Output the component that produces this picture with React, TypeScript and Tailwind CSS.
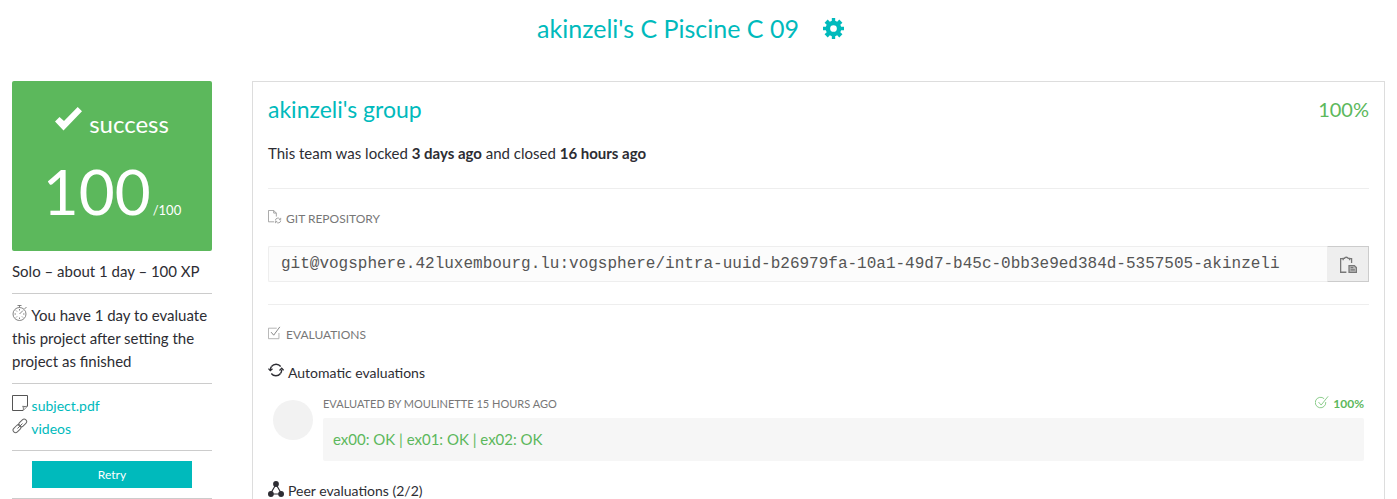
import type { ReactNode, SVGProps } from "react";

function Icon({ children, ...props }: SVGProps<SVGSVGElement> & { children: ReactNode }) {
  return (
    <svg viewBox="0 0 16 16" fill="none" stroke="currentColor" strokeWidth="1" aria-hidden="true" {...props}>
      {children}
    </svg>
  );
}

function GearIcon() {
  return (
    <svg viewBox="0 0 20 20" className="size-[21px]" fill="currentColor" aria-hidden="true">
      <path
        fillRule="evenodd"
        d="M8.4 0h3.2v2.7l1.9.8 2-2 3 3-2 2 .8 1.9H20v3.2h-2.7l-.8 1.9 2 2-3 3-2-2-1.9.8V20H8.400v-2.700l-1.900-.8-2 2-3-3 2-2-.8-1.900H0V8.400h2.700l.8-1.900-2-2 3-3 2 2 1.900-.8zM10 6.800a3.200 3.200 0 1 0 0 6.400 3.200 3.200 0 0 0 0-6.400z"
      />
    </svg>
  );
}

function CheckIcon() {
  return (
    <svg viewBox="0 0 28 24" className="mt-0.5 h-6 w-7" fill="currentColor" aria-hidden="true">
      <path d="M0 14.500 4.500 10l4.500 4L22.700 0 27 4.300 8.500 23.500z" />
    </svg>
  );
}

function StopwatchIcon() {
  return (
    <Icon className="inline size-4 align-baseline text-[#666]">
      <circle cx="7.500" cy="9" r="6.500" strokeWidth=".8" />
      <path
        d="M5.500.5h4M7.500.5v2M12.500 4l2-2M7.500 4v1.500M7.500 12.500V14M2.500 9H4M11 9h1.500M4 5.500l1 1M11 5.500 7.500 9M4 12.500l1-1M11 12.500l-1-1"
        strokeWidth=".8"
      />
    </Icon>
  );
}

function NoteIcon() {
  return (
    <Icon className="inline size-4 align-baseline text-[#555]">
      <path d="M.5.5h15v10.500l-4.500 4.500H.5z" />
      <path d="M11 15.500c.6-1.500.5-3-.3-4.300 1.500.5 3.300.4 4.800-.2" fill="#ddd" strokeWidth=".8" />
    </Icon>
  );
}

function LinkIcon() {
  return (
    <Icon className="inline size-4 align-baseline text-[#666]">
      <rect x="-4.500" y="-2.500" width="9" height="5" rx="2.500" transform="translate(10.700 5) rotate(-45)" />
      <rect x="-4.500" y="-2.500" width="9" height="5" rx="2.500" transform="translate(5 10.700) rotate(-45)" />
      <path d="m5.500 10.500 5-5" />
    </Icon>
  );
}

function RepoIcon() {
  return (
    <Icon className="mb-1 size-3.5 text-[#999]">
      <path d="M7 13.500H.5V.5h6l3 3v4M6.500.5v3h3" />
      <path d="M8.500 12a2.700 2.700 0 0 1 5-1.500M14.500 9v2h-2M14.500 12a2.700 2.700 0 0 1-5 1.500M8.500 15v-2h2" />
    </Icon>
  );
}

function PasteIcon() {
  return (
    <Icon className="size-[17px] text-[#777]" strokeWidth="1.2">
      <path d="M6 15.300H.6V2.500h2.500M8.500 2.500h2.400v4" />
      <path d="M3 4V2.300h1.200C4.500.8 7.300.8 7.700 2.300H9V4" />
      <path d="M8.500 9h5l2 2v4.500h-7z" fill="#bbb" />
      <path d="M10 11h2.500M10 13h4" />
    </Icon>
  );
}

function CheckBoxIcon() {
  return (
    <Icon className="mb-1 size-3.5 text-[#aaa]">
      <path d="M10 2.500H.5v12h12V8" />
      <path d="m3.500 7 3 3.500L13.500 1" stroke="#777" />
    </Icon>
  );
}

function SyncIcon() {
  return (
    <Icon className="mb-1.5 size-4" strokeWidth="1.3">
      <path d="M3.500 4.500A5.800 5.800 0 0 1 12.700 4.500M12.500 11.500A5.800 5.800 0 0 1 3.300 11.500" />
      <path d="M2.300 8.300A5.800 5.800 0 0 1 3.500 4.500M13.700 7.700a5.800 5.800 0 0 1-1.200 3.800" />
      <path d="m.4 6.600 1.900 2 2.200-1.900M11.500 8.500l2.200-2.200 1.900 2.100" />
    </Icon>
  );
}

function PeersIcon() {
  return (
    <Icon className="mb-1 size-4">
      <path d="M7 5 3.500 11M9 5l3.500 6M5 13h6" strokeWidth="1.2" />
      <circle cx="8" cy="3" r="2.900" fill="currentColor" stroke="none" />
      <circle cx="2.900" cy="13" r="2.900" fill="currentColor" stroke="none" />
      <circle cx="13.100" cy="13" r="2.900" fill="currentColor" stroke="none" />
    </Icon>
  );
}

function ValidatedIcon() {
  return (
    <Icon className="mb-1 size-3.5" strokeWidth=".8">
      <path d="M10.500 4.300A6 6 0 1 0 12.300 8" />
      <path d="m4 8 3 3.500L15 1.500" />
    </Icon>
  );
}

function SectionLabel({ icon, children }: { icon: ReactNode; children: ReactNode }) {
  return (
    <h4 className="flex h-5 items-center gap-1 text-xs leading-5 text-[#777] uppercase">
      {icon}
      {children}
    </h4>
  );
}

function Sidebar() {
  return (
    <aside className="w-[200px] shrink-0 leading-[23px]">
      <div className="flex h-[170px] flex-col items-center rounded-xs bg-[#5cb85c] pt-6 text-white">
        <div className="flex items-start gap-1.5 text-2xl leading-[38px]">
          <CheckIcon />
          <span>success</span>
        </div>
        <div className="flex items-baseline gap-0.5 pt-1 text-[62px] leading-[88px]">
          <span>100</span>
          <span className="text-[13px]">/100</span>
        </div>
      </div>
      <p className="border-b border-[#ccc] pt-[9px] pb-2.5">Solo – about 1 day – 100 XP</p>
      <p className="border-b border-[#ccc] py-2.5">
        <StopwatchIcon /> You have 1 day to evaluate this project after setting the project as finished
      </p>
      <ul className="border-b border-[#ccc] py-2.5 text-sm leading-[23px]">
        <li>
          <NoteIcon /> <a href="#subject" className="text-[#00babc]">subject.pdf</a>
        </li>
        <li>
          <LinkIcon /> <a href="#videos" className="text-[#00babc]">videos</a>
        </li>
      </ul>
      <div className="border-b border-[#ccc] px-5 py-2.5">
        <button type="button" className="block h-[27px] w-full bg-[#00babc] text-xs text-white">
          Retry
        </button>
      </div>
    </aside>
  );
}

function Team() {
  return (
    <main className="min-w-0 flex-1 border border-[#ddd] px-[15px] pt-[11px] pb-12">
      <div className="flex items-center justify-between leading-8">
        <h2 className="text-[23px] leading-8 text-[#00babc]">akinzeli's group</h2>
        <span className="text-xl text-[#5cb85c]">100%</span>
      </div>
      <p className="mt-4 leading-6">
        This team was locked <strong>3 days ago</strong> and closed <strong>16 hours ago</strong>
      </p>

      <section className="mt-[23px] border-t border-[#eee] pt-5">
        <SectionLabel icon={<RepoIcon />}>Git repository</SectionLabel>
        <div className="mt-[17px] flex h-9">
          <input
            readOnly
            aria-label="Git repository"
            value="git@vogsphere.42luxembourg.lu:vogsphere/intra-uuid-b26979fa-10a1-49d7-b45c-0bb3e9ed384d-5357505-akinzeli"
            className="min-w-0 flex-1 rounded-l-xs border border-r-0 border-[#eee] bg-[#fcfcfc] px-3 font-['Liberation_Mono',monospace] text-base text-[#555]"
          />
          <button
            type="button"
            aria-label="Copy repository address"
            className="flex w-[42px] items-center justify-center border border-[#ccc] border-l-[#eee] bg-[#eee]"
          >
            <PasteIcon />
          </button>
        </div>
      </section>

      <section className="mt-[22px] border-t border-[#eee] pt-5">
        <SectionLabel icon={<CheckBoxIcon />}>Evaluations</SectionLabel>
        <h4 className="mt-4 flex h-6 items-center gap-1 text-sm">
          <SyncIcon />
          Automatic evaluations
        </h4>
        <div className="flex px-[5px] pt-2.5">
          <div className="mt-[5px] mr-2.5 size-10 shrink-0 rounded-full bg-[#f2f2f2]" />
          <div className="min-w-0 flex-1">
            <div className="flex h-[23px] justify-between pb-[5px] leading-[18px]">
              <span className="text-[11px] text-[#777] uppercase">Evaluated by moulinette 15 hours ago</span>
              <span className="flex items-center gap-1 text-xs font-bold text-[#5cb85c]">
                <ValidatedIcon />
                100%
              </span>
            </div>
            <p className="rounded-xs bg-[#f6f6f6] p-2.5 leading-[23px] text-[#5cb85c]">
              ex00: OK | ex01: OK | ex02: OK
            </p>
          </div>
        </div>
        <h4 className="mt-[18px] flex h-6 items-center gap-1 text-sm">
          <PeersIcon />
          Peer evaluations (2/2)
        </h4>
      </section>
    </main>
  );
}

export default function App() {
  return (
    <div className="h-screen overflow-hidden bg-white font-[Lato,sans-serif] text-[15px] text-[#2d2d33]">
      <header className="flex h-[81px] items-start justify-center gap-6 pt-2 pr-4 text-[#00babc]">
        <h1 className="text-[25px] leading-10">akinzeli's C Piscine C 09</h1>
        <button type="button" aria-label="Settings" className="flex h-10 items-center">
          <GearIcon />
        </button>
      </header>
      <div className="flex items-start gap-10 px-3">
        <Sidebar />
        <Team />
      </div>
    </div>
  );
}
